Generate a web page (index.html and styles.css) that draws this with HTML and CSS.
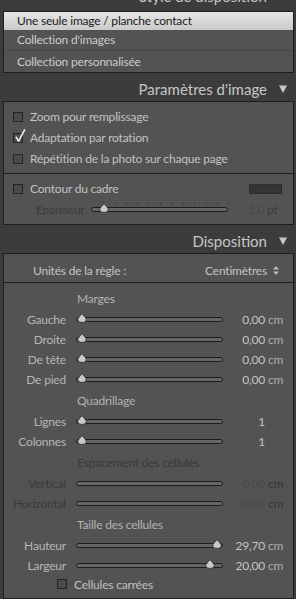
FILE: index.html
```html
<!DOCTYPE html>
<html lang="fr">
<head>
<meta charset="utf-8">
<title>Disposition</title>
<link rel="stylesheet" href="styles.css">
</head>
<body>
<div class="sidebar">
  <div class="panel-header panel-header--top">
    <span class="panel-title">Style de disposition</span>
    <svg class="tri" viewBox="0 0 8 8"><path d="M0 0.5H8L4 8Z"/></svg>
  </div>
  <div class="box">
    <div class="list-item list-item--selected">Une seule image / planche contact</div>
    <div class="list-item list-item--sep">Collection d'images</div>
    <div class="list-item list-item--last">Collection personnalisée</div>
  </div>

  <div class="panel-header">
    <span class="panel-title">Paramètres d'image</span>
    <svg class="tri" viewBox="0 0 8 8"><path d="M0 0.5H8L4 8Z"/></svg>
  </div>
  <div class="box">
    <div class="section">
      <div class="check-row"><span class="cb"></span><span>Zoom pour remplissage</span></div>
      <div class="check-row"><span class="cb cb--checked"><svg class="tick" viewBox="0 0 12 14"><path d="M2.2 8.2L4.6 12.2L10.6 0.8"/></svg></span><span>Adaptation par rotation</span></div>
      <div class="check-row"><span class="cb"></span><span>Répétition de la photo sur chaque page</span></div>
    </div>
    <div class="section">
      <div class="check-row check-row--swatch"><span class="cb"></span><span class="grow">Contour du cadre</span><span class="swatch"></span></div>
      <div class="stroke-row">
        <span class="stroke-label">Epaisseur</span>
        <div class="track"><span class="ticks"></span><svg class="thumb" style="left:8.8%" viewBox="0 0 11 10"><path d="M5.5 0.6L9.4 5.2C10.4 7.6 8.8 9.4 5.5 9.4C2.2 9.4 0.6 7.6 1.6 5.2Z"/></svg></div>
        <span class="stroke-value">1,0 <span class="unit-dim">pt</span></span>
      </div>
    </div>
  </div>

  <div class="panel-header">
    <span class="panel-title">Disposition</span>
    <svg class="tri" viewBox="0 0 8 8"><path d="M0 0.5H8L4 8Z"/></svg>
  </div>
  <div class="box">
    <div class="units-row">
      <span>Unités de la règle :</span>
      <span class="select">Centimètres <svg class="updown" viewBox="0 0 6 9"><path d="M3 0L6 3.4H0Z M3 9L6 5.6H0Z"/></svg></span>
    </div>
    <div class="layout">
      <div class="group">
        <div class="group-title">Marges</div>
        <div class="slider-row"><span class="s-label">Gauche</span><div class="track"><svg class="thumb" style="left:3.7%" viewBox="0 0 11 10"><path d="M5.5 0.6L9.4 5.2C10.4 7.6 8.8 9.4 5.5 9.4C2.2 9.4 0.6 7.6 1.6 5.2Z"/></svg></div><span class="s-value">0,00</span><span class="s-unit">cm</span></div>
        <div class="slider-row"><span class="s-label">Droite</span><div class="track"><svg class="thumb" style="left:3.7%" viewBox="0 0 11 10"><path d="M5.5 0.6L9.4 5.2C10.4 7.6 8.8 9.4 5.5 9.4C2.2 9.4 0.6 7.6 1.6 5.2Z"/></svg></div><span class="s-value">0,00</span><span class="s-unit">cm</span></div>
        <div class="slider-row"><span class="s-label">De tête</span><div class="track"><svg class="thumb" style="left:3.7%" viewBox="0 0 11 10"><path d="M5.5 0.6L9.4 5.2C10.4 7.6 8.8 9.4 5.5 9.4C2.2 9.4 0.6 7.6 1.6 5.2Z"/></svg></div><span class="s-value">0,00</span><span class="s-unit">cm</span></div>
        <div class="slider-row"><span class="s-label">De pied</span><div class="track"><svg class="thumb" style="left:3.7%" viewBox="0 0 11 10"><path d="M5.5 0.6L9.4 5.2C10.4 7.6 8.8 9.4 5.5 9.4C2.2 9.4 0.6 7.6 1.6 5.2Z"/></svg></div><span class="s-value">0,00</span><span class="s-unit">cm</span></div>
      </div>
      <div class="group">
        <div class="group-title">Quadrillage</div>
        <div class="slider-row"><span class="s-label">Lignes</span><div class="track"><svg class="thumb" style="left:3.7%" viewBox="0 0 11 10"><path d="M5.5 0.6L9.4 5.2C10.4 7.6 8.8 9.4 5.5 9.4C2.2 9.4 0.6 7.6 1.6 5.2Z"/></svg></div><span class="s-value">1</span><span class="s-unit"></span></div>
        <div class="slider-row"><span class="s-label">Colonnes</span><div class="track"><svg class="thumb" style="left:3.7%" viewBox="0 0 11 10"><path d="M5.5 0.6L9.4 5.2C10.4 7.6 8.8 9.4 5.5 9.4C2.2 9.4 0.6 7.6 1.6 5.2Z"/></svg></div><span class="s-value">1</span><span class="s-unit"></span></div>
      </div>
      <div class="group group--disabled">
        <div class="group-title">Espacement des cellules</div>
        <div class="slider-row"><span class="s-label">Vertical</span><div class="track"></div><span class="s-value">0,00</span><span class="s-unit">cm</span></div>
        <div class="slider-row"><span class="s-label">Horizontal</span><div class="track"></div><span class="s-value">0,00</span><span class="s-unit">cm</span></div>
      </div>
      <div class="group">
        <div class="group-title">Taille des cellules</div>
        <div class="slider-row"><span class="s-label">Hauteur</span><div class="track"><svg class="thumb" style="left:96.6%" viewBox="0 0 11 10"><path d="M5.5 0.6L9.4 5.2C10.4 7.6 8.8 9.4 5.5 9.4C2.2 9.4 0.6 7.6 1.6 5.2Z"/></svg></div><span class="s-value">29,70</span><span class="s-unit">cm</span></div>
        <div class="slider-row"><span class="s-label">Largeur</span><div class="track"><svg class="thumb" style="left:91.5%" viewBox="0 0 11 10"><path d="M5.5 0.6L9.4 5.2C10.4 7.6 8.8 9.4 5.5 9.4C2.2 9.4 0.6 7.6 1.6 5.2Z"/></svg></div><span class="s-value">20,00</span><span class="s-unit">cm</span></div>
      </div>
      <div class="square-row"><span class="cb"></span><span>Cellules carrées</span></div>
    </div>
  </div>
</div>
</body>
</html>
```

FILE: styles.css
```css
* { box-sizing: border-box; }
html, body { margin: 0; padding: 0; }
body {
  background: #3c3c3c;
  font-family: Lato, "Liberation Sans", sans-serif;
  font-size: 12px;
  letter-spacing: -0.2px;
  color: #c2c2c2;
  width: 296px;
  height: 599px;
  overflow: hidden;
}
.sidebar { display: flex; flex-direction: column; }

.panel-header {
  height: 28px;
  padding: 4px 9px 0 0;
  display: flex;
  justify-content: flex-end;
  align-items: center;
  gap: 12px;
}
.panel-header--top { margin-top: -17px; padding: 0 9px 3px 0; }
.panel-title { font-size: 15px; line-height: 20px; letter-spacing: 0; color: #c6c6c6; }
.tri { width: 8px; height: 8px; display: block; fill: #c6c6c6; }

.box {
  margin: 0 2px 0 3px;
  border: 1px solid #1e1e1e;
  background: #535353;
}

/* list */
.list-item {
  height: 20px;
  line-height: 20px;
  padding-left: 13px;
  color: #cbcbcb;
}
.list-item--selected {
  height: 18px;
  line-height: 18px;
  background: linear-gradient(#e6e6e6, #cacaca);
  color: #1b1b1b;
}
.list-item--sep { height: 21px; border-bottom: 1px solid #484848; }
.list-item--last { height: 21px; line-height: 21px; }

/* checks */
.section { padding: 4px 0; }
.section + .section { border-top: 1px solid #1e1e1e; }
.check-row {
  height: 21px;
  display: flex;
  align-items: center;
  padding: 0 11px 0 9px;
}
.cb {
  position: relative;
  width: 10px;
  height: 10px;
  border: 1px solid #242424;
  background: #4a4a4a;
  margin-right: 7px;
  flex: none;
}
.tick {
  position: absolute;
  left: 0;
  top: -5px;
  width: 12px;
  height: 14px;
  overflow: visible;
  fill: none;
  stroke: #e4e4e4;
  stroke-width: 1.7;
  stroke-linecap: round;
  stroke-linejoin: round;
}
.grow { flex: 1; }
.swatch {
  width: 33px;
  height: 10px;
  background: #343434;
  border: 1px solid #2e2e2e;
}

.stroke-row {
  height: 21px;
  display: grid;
  grid-template-columns: 87px 137px 1fr;
  align-items: center;
  color: #3b3b3b;
}
.stroke-label { padding-left: 32px; }
.stroke-value { padding-left: 20px; color: #474747; }
.unit-dim { color: #3b3b3b; }
.ticks {
  position: absolute;
  left: 11px;
  right: -2px;
  top: -6px;
  height: 3px;
  background-image: linear-gradient(to right, #3e3e3e 1px, transparent 1px);
  background-size: 11.4px 100%;
}

/* tracks */
.track {
  position: relative;
  height: 5px;
  border: 1px solid #1c1c1c;
  border-radius: 3px;
  background: #666;
}
.thumb {
  position: absolute;
  top: -5px;
  width: 11px;
  height: 10px;
  transform: translateX(-50%);
  fill: #c9c9c9;
  stroke: #2a2a2a;
  stroke-width: 0.8;
}

/* layout panel */
.units-row {
  height: 29px;
  padding: 4px 14px 0 29px;
  display: flex;
  align-items: center;
  justify-content: space-between;
  border-bottom: 1px solid #1e1e1e;
  color: #c4c4c4;
}
.select { display: flex; align-items: center; gap: 6px; }
.updown { width: 6px; height: 9px; fill: #bcbcbc; }

.layout { padding: 6px 0 5px; }
.group + .group { margin-top: 2px; }
.group-title { height: 20px; line-height: 20px; padding-left: 73px; color: #b4b4b4; }
.slider-row {
  height: 20px;
  display: grid;
  grid-template-columns: 72px 147px 42px 19px;
  align-items: center;
}
.s-label { text-align: right; padding-right: 10px; color: #b6b6b6; }
.s-value { text-align: right; color: #c4c4c4; }
.s-unit { padding-left: 3px; color: #b0b0b0; }

.group--disabled .group-title,
.group--disabled .s-label { color: #3a3a3a; }
.group--disabled .s-value { color: #4a4a4a; }
.group--disabled .s-unit { color: #353535; }

.square-row {
  height: 18px;
  display: flex;
  align-items: center;
  padding-left: 53px;
  color: #c0c0c0;
}
```
